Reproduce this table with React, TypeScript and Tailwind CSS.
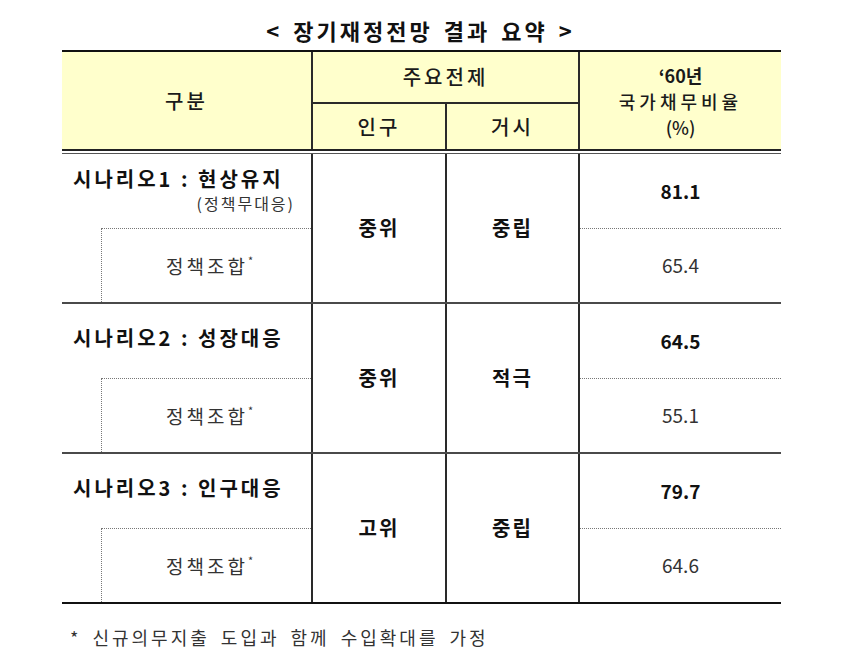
const rows = [
  { title: '시나리오1 : 현상유지', sub: '(정책무대응)', pop: '중위', macro: '중립', base: '81.1', mix: '65.4' },
  { title: '시나리오2 : 성장대응', sub: '', pop: '중위', macro: '적극', base: '64.5', mix: '55.1' },
  { title: '시나리오3 : 인구대응', sub: '', pop: '고위', macro: '중립', base: '79.7', mix: '64.6' },
];

const Scenario = ({ row, last }: { row: (typeof rows)[number]; last: boolean }) => {
  return (
    <div
      className={`flex h-[150px] ${last ? 'border-b-2 border-[#111]' : 'border-b-2 border-[#4a4a4a]'}`}
    >
      <div className="w-[251px] flex flex-col border-r-2 border-[#2a2a2a]">
        <div className={`h-[74px] flex flex-col pl-[11px] ${row.sub ? 'pt-[11px]' : 'pt-[20px]'}`}>
          <span className="text-[20px] font-bold tracking-[3px] leading-[27px] text-[#111] whitespace-nowrap">
            {row.title}
          </span>
          {row.sub && (
            <span className="self-end mr-[16px] text-[16px] tracking-[2px] leading-[22px] text-[#333]">
              {row.sub}
            </span>
          )}
        </div>
        <div className="flex-1 ml-[39px] border-t border-l border-dotted border-[#777] flex items-center justify-center">
          <div className="flex items-start pl-[6px] text-[#333]">
            <span className="text-[19px] tracking-[3px] leading-[28px]">정책조합</span>
            <span className="text-[11px] leading-[16px]">*</span>
          </div>
        </div>
      </div>
      <div className="w-[134px] flex items-center justify-center border-r-2 border-[#2a2a2a] text-[20px] font-bold tracking-[2px] text-[#111]">
        {row.pop}
      </div>
      <div className="w-[133px] flex items-center justify-center border-r-2 border-[#2a2a2a] text-[20px] font-bold tracking-[2px] text-[#111]">
        {row.macro}
      </div>
      <div className="flex-1 flex flex-col">
        <div className="h-[74px] flex items-center justify-center text-[19px] font-bold text-[#111]">{row.base}</div>
        <div className="flex-1 border-t border-dotted border-[#777] flex items-center justify-center text-[19px] text-[#333]">
          {row.mix}
        </div>
      </div>
    </div>
  );
};

const App = () => {
  return (
    <div className="w-[841px] h-[658px] bg-white font-['Noto_Sans_CJK_KR',sans-serif] overflow-hidden">
      <h1 className="pt-[15px] h-[50px] text-center text-[22px] font-bold tracking-[3px] leading-[30px] text-[#111] [word-spacing:3px]">
        &lt; 장기재정전망 결과 요약 &gt;
      </h1>
      <div className="ml-[62px] w-[719px]">
        <div className="border-t-2 border-[#111]">
          <div className="flex h-[99px] bg-[#ffffcc] border-b-2 border-[#222] text-[20px] font-medium tracking-[3px] text-[#1a1a1a]">
            <div className="w-[251px] flex items-center justify-center border-r-2 border-[#2a2a2a]">구분</div>
            <div className="w-[267px] flex flex-col border-r-2 border-[#2a2a2a]">
              <div className="h-[52px] flex items-center justify-center border-b-2 border-[#2a2a2a]">주요전제</div>
              <div className="flex-1 flex">
                <div className="w-[134px] flex items-center justify-center border-r-2 border-[#2a2a2a]">인구</div>
                <div className="flex-1 flex items-center justify-center">거시</div>
              </div>
            </div>
            <div className="flex-1 flex flex-col items-center justify-center text-[18px]">
              <span className="font-bold tracking-normal leading-[26px]">‘60년</span>
              <span className="leading-[26px] tracking-[4px]">국가채무비율</span>
              <span className="tracking-normal leading-[26px]">(%)</span>
            </div>
          </div>
          <div className="h-[3px] border-b border-[#555]" />
        </div>
        {rows.map((row, i) => (
          <Scenario key={row.title} row={row} last={i === rows.length - 1} />
        ))}
      </div>
      <p className="mt-[20px] ml-[70px] text-[18px] tracking-[3px] leading-[26px] text-[#333] [word-spacing:4px]">
        * 신규의무지출 도입과 함께 수입확대를 가정
      </p>
    </div>
  );
};

export default App;
